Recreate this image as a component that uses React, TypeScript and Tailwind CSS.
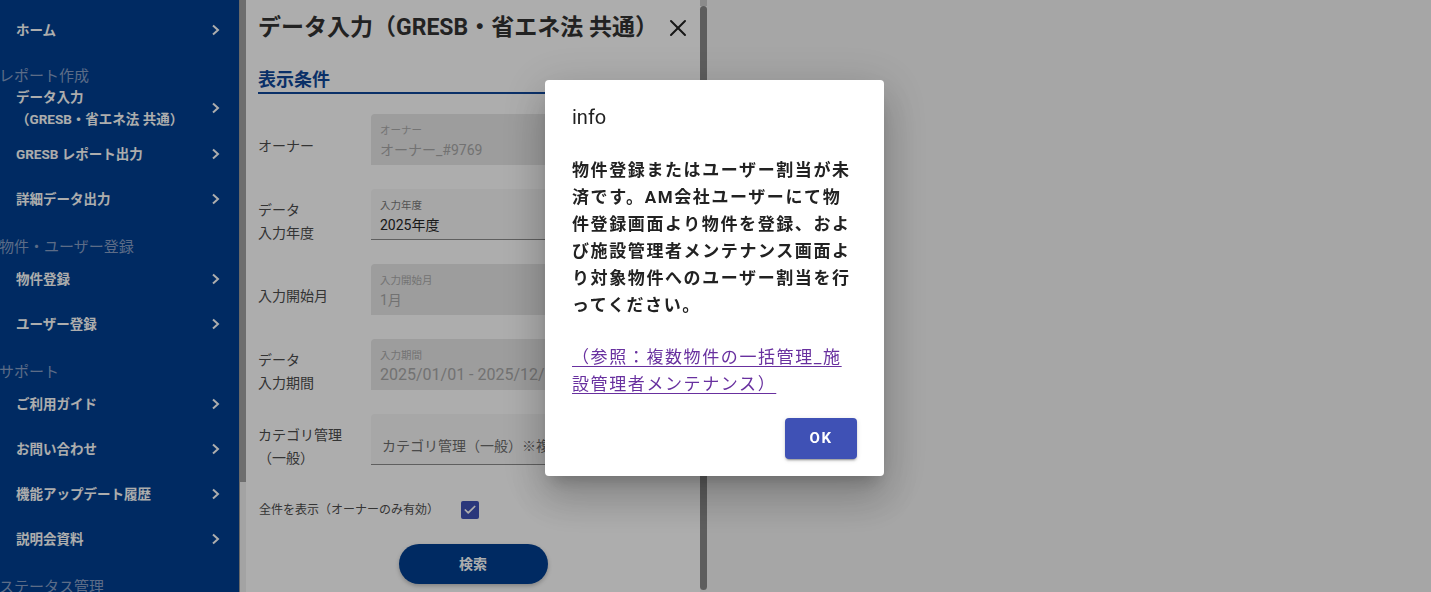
import { X, Check } from "lucide-react";

const FONT = "font-['Roboto','Noto_Sans_CJK_JP',sans-serif]";

function Chevron() {
  return (
    <svg width="9" height="12" viewBox="0 0 9 12" className="shrink-0">
      <polyline points="2,1.5 7,6 2,10.5" fill="none" stroke="currentColor" strokeWidth="2" />
    </svg>
  );
}

function NavItem({ lines, h = "h-[45px]" }: { lines: string[]; h?: string }) {
  return (
    <div className={`flex ${h} items-center justify-between pl-4 pr-[19px]`}>
      <div className="flex flex-col text-[13.5px] font-bold leading-[22px] whitespace-nowrap">
        {lines.map((l) => (
          <span key={l}>{l}</span>
        ))}
      </div>
      <Chevron />
    </div>
  );
}

function NavHeader({ label, first = false }: { label: string; first?: boolean }) {
  return (
    <div
      className={`${first ? "h-[33px] pt-[15px]" : "h-[35px] pt-[17px]"} -ml-[1px] text-[15px] leading-[18px] text-[#889fc7] whitespace-nowrap`}
    >
      {label}
    </div>
  );
}

function Sidebar() {
  return (
    <aside className="flex h-full shrink-0">
      <nav className="w-[239px] bg-[#003f91] pt-[7px] text-white overflow-hidden">
        <NavItem lines={["ホーム"]} />
        <NavHeader label="レポート作成" first />
        <NavItem lines={["データ入力", "（GRESB・省エネ法 共通）"]} h="h-[46px]" />
        <NavItem lines={["GRESB レポート出力"]} />
        <NavItem lines={["詳細データ出力"]} />
        <NavHeader label="物件・ユーザー登録" />
        <NavItem lines={["物件登録"]} />
        <NavItem lines={["ユーザー登録"]} />
        <NavHeader label="サポート" />
        <NavItem lines={["ご利用ガイド"]} />
        <NavItem lines={["お問い合わせ"]} />
        <NavItem lines={["機能アップデート履歴"]} />
        <NavItem lines={["説明会資料"]} />
        <NavHeader label="ステータス管理" />
      </nav>
      <div className="w-[7px] bg-[#f1f1f1] border-l border-[#9a9a9a]">
        <div className="h-[482px] bg-[#a2a2a2]" />
      </div>
    </aside>
  );
}

function Label({ lines }: { lines: string[] }) {
  return (
    <div className="flex h-[51px] w-[113px] shrink-0 flex-col justify-center pt-[14px] text-[14px] leading-[23px] text-[#4d4d4d]">
      {lines.map((l) => (
        <span key={l} className="whitespace-nowrap">
          {l}
        </span>
      ))}
    </div>
  );
}

function FilledField({
  label,
  value,
  disabled,
  valueSize = "text-[14px]",
}: {
  label: string;
  value: string;
  disabled?: boolean;
  valueSize?: string;
}) {
  return (
    <div
      className={`h-[51px] flex-1 overflow-hidden rounded-t-[4px] pl-[9px] pt-[10px] whitespace-nowrap ${
        disabled ? "bg-[#e7e7e7]" : "bg-[#f6f6f6] border-b border-[#8c8c8c]"
      }`}
    >
      <div className={`text-[10.5px] leading-[14px] ${disabled ? "text-[#ababab]" : "text-[#7a7a7a]"}`}>
        {label}
      </div>
      <div className={`mt-[2px] leading-[20px] ${valueSize} ${disabled ? "text-[#a9a9a9]" : "text-[#262626]"}`}>
        {value}
      </div>
    </div>
  );
}

function Panel() {
  return (
    <section className="flex h-full w-[461px] shrink-0 bg-white">
      <div className="flex-1 px-[12px]">
        <div className="flex h-[44px] items-center justify-between pt-[12px]">
          <h1 className="text-[23px] font-bold leading-[32px] text-[#333333] whitespace-nowrap">
            データ入力（GRESB・省エネ法 共通）
          </h1>
          <X size={28} strokeWidth={1.7} className="-mr-[4px] text-[#222222]" />
        </div>

        <h2 className="mt-[24px] border-b-2 border-[#10479a] text-[18px] font-bold leading-[24px] text-[#10479a]">
          表示条件
        </h2>

        <div className="mt-[20px] flex flex-col gap-[24px]">
          <div className="flex h-[51px]">
            <Label lines={["オーナー"]} />
            <FilledField label="オーナー" value="オーナー_#9769" disabled />
          </div>
          <div className="flex h-[51px]">
            <Label lines={["データ", "入力年度"]} />
            <FilledField label="入力年度" value="2025年度" />
          </div>
          <div className="flex h-[51px]">
            <Label lines={["入力開始月"]} />
            <FilledField label="入力開始月" value="1月" disabled />
          </div>
          <div className="flex h-[51px]">
            <Label lines={["データ", "入力期間"]} />
            <FilledField label="入力期間" value="2025/01/01 - 2025/12/31" disabled valueSize="text-[16px]" />
          </div>
          <div className="flex h-[51px]">
            <Label lines={["カテゴリ管理", "（一般）"]} />
            <div className="h-[51px] flex-1 overflow-hidden rounded-t-[4px] border-b border-[#8c8c8c] bg-[#f6f6f6] pl-[11px] pt-[22px] text-[14px] leading-[20px] text-[#6e6e6e] whitespace-nowrap">
              カテゴリ管理（一般）※複数選択可
            </div>
          </div>
        </div>

        <div className="mt-[36px] flex h-[18px] items-center gap-[22px] pl-[1px]">
          <span className="text-[12px] text-[#4d4d4d] whitespace-nowrap">全件を表示（オーナーのみ有効）</span>
          <span className="flex h-[18px] w-[18px] items-center justify-center rounded-[2px] bg-[#3f51b5]">
            <Check size={14} strokeWidth={3} className="text-white" />
          </span>
        </div>

        <div className="mt-[25px] flex justify-center">
          <button className="h-[40px] w-[149px] rounded-full bg-[#003f91] text-[14px] font-bold text-white shadow-[0_2px_4px_rgba(0,0,0,0.25)]">
            検索
          </button>
        </div>
      </div>
      <div className="flex w-[7px] flex-col bg-[#f4f4f4]">
        <div className="h-[6px] bg-[#cdcdcd]" />
        <div className="mb-[2px] flex-1 rounded-full bg-[#8a8a8a]" />
      </div>
    </section>
  );
}

function InfoDialog() {
  return (
    <div className="fixed inset-0 flex items-start justify-center bg-black/[0.32] pt-[80px]">
      <div className="-ml-[2px] w-[339px] rounded-[4px] bg-white px-[27px] pb-[17px] pt-[21px] shadow-[0_11px_15px_-7px_rgba(0,0,0,0.2),0_24px_38px_3px_rgba(0,0,0,0.14),0_9px_46px_8px_rgba(0,0,0,0.12)]">
        <h3 className="text-[20px] font-normal leading-[32px] text-[#212121]">info</h3>
        <p className="mt-[24px] text-[17px] font-bold leading-[27px] tracking-[1.6px] text-[#222222] whitespace-nowrap">
          物件登録またはユーザー割当が未
          <br />
          済です。AM会社ユーザーにて物
          <br />
          件登録画面より物件を登録、およ
          <br />
          び施設管理者メンテナンス画面よ
          <br />
          り対象物件へのユーザー割当を行
          <br />
          ってください。
        </p>
        <p className="mt-[25px] text-[17px] leading-[27px] tracking-[1.6px] whitespace-nowrap">
          <a href="#" className="text-[#68309f] underline underline-offset-[3px]">
            （参照：複数物件の一括管理_施
            <br />
            設管理者メンテナンス）
          </a>
        </p>
        <div className="mt-[20px] flex justify-end">
          <button className="h-[41px] w-[72px] rounded-[4px] bg-[#3f51b5] text-[15px] font-bold tracking-[1.5px] text-white shadow-[0_3px_1px_-2px_rgba(0,0,0,0.2),0_2px_2px_0_rgba(0,0,0,0.14),0_1px_5px_0_rgba(0,0,0,0.12)]">
            OK
          </button>
        </div>
      </div>
    </div>
  );
}

export default function App() {
  return (
    <div className={`relative flex h-[592px] w-full overflow-hidden bg-[#f5f5f5] [text-spacing-trim:space-all] ${FONT}`}>
      <Sidebar />
      <Panel />
      <div className="flex-1" />
      <InfoDialog />
    </div>
  );
}
